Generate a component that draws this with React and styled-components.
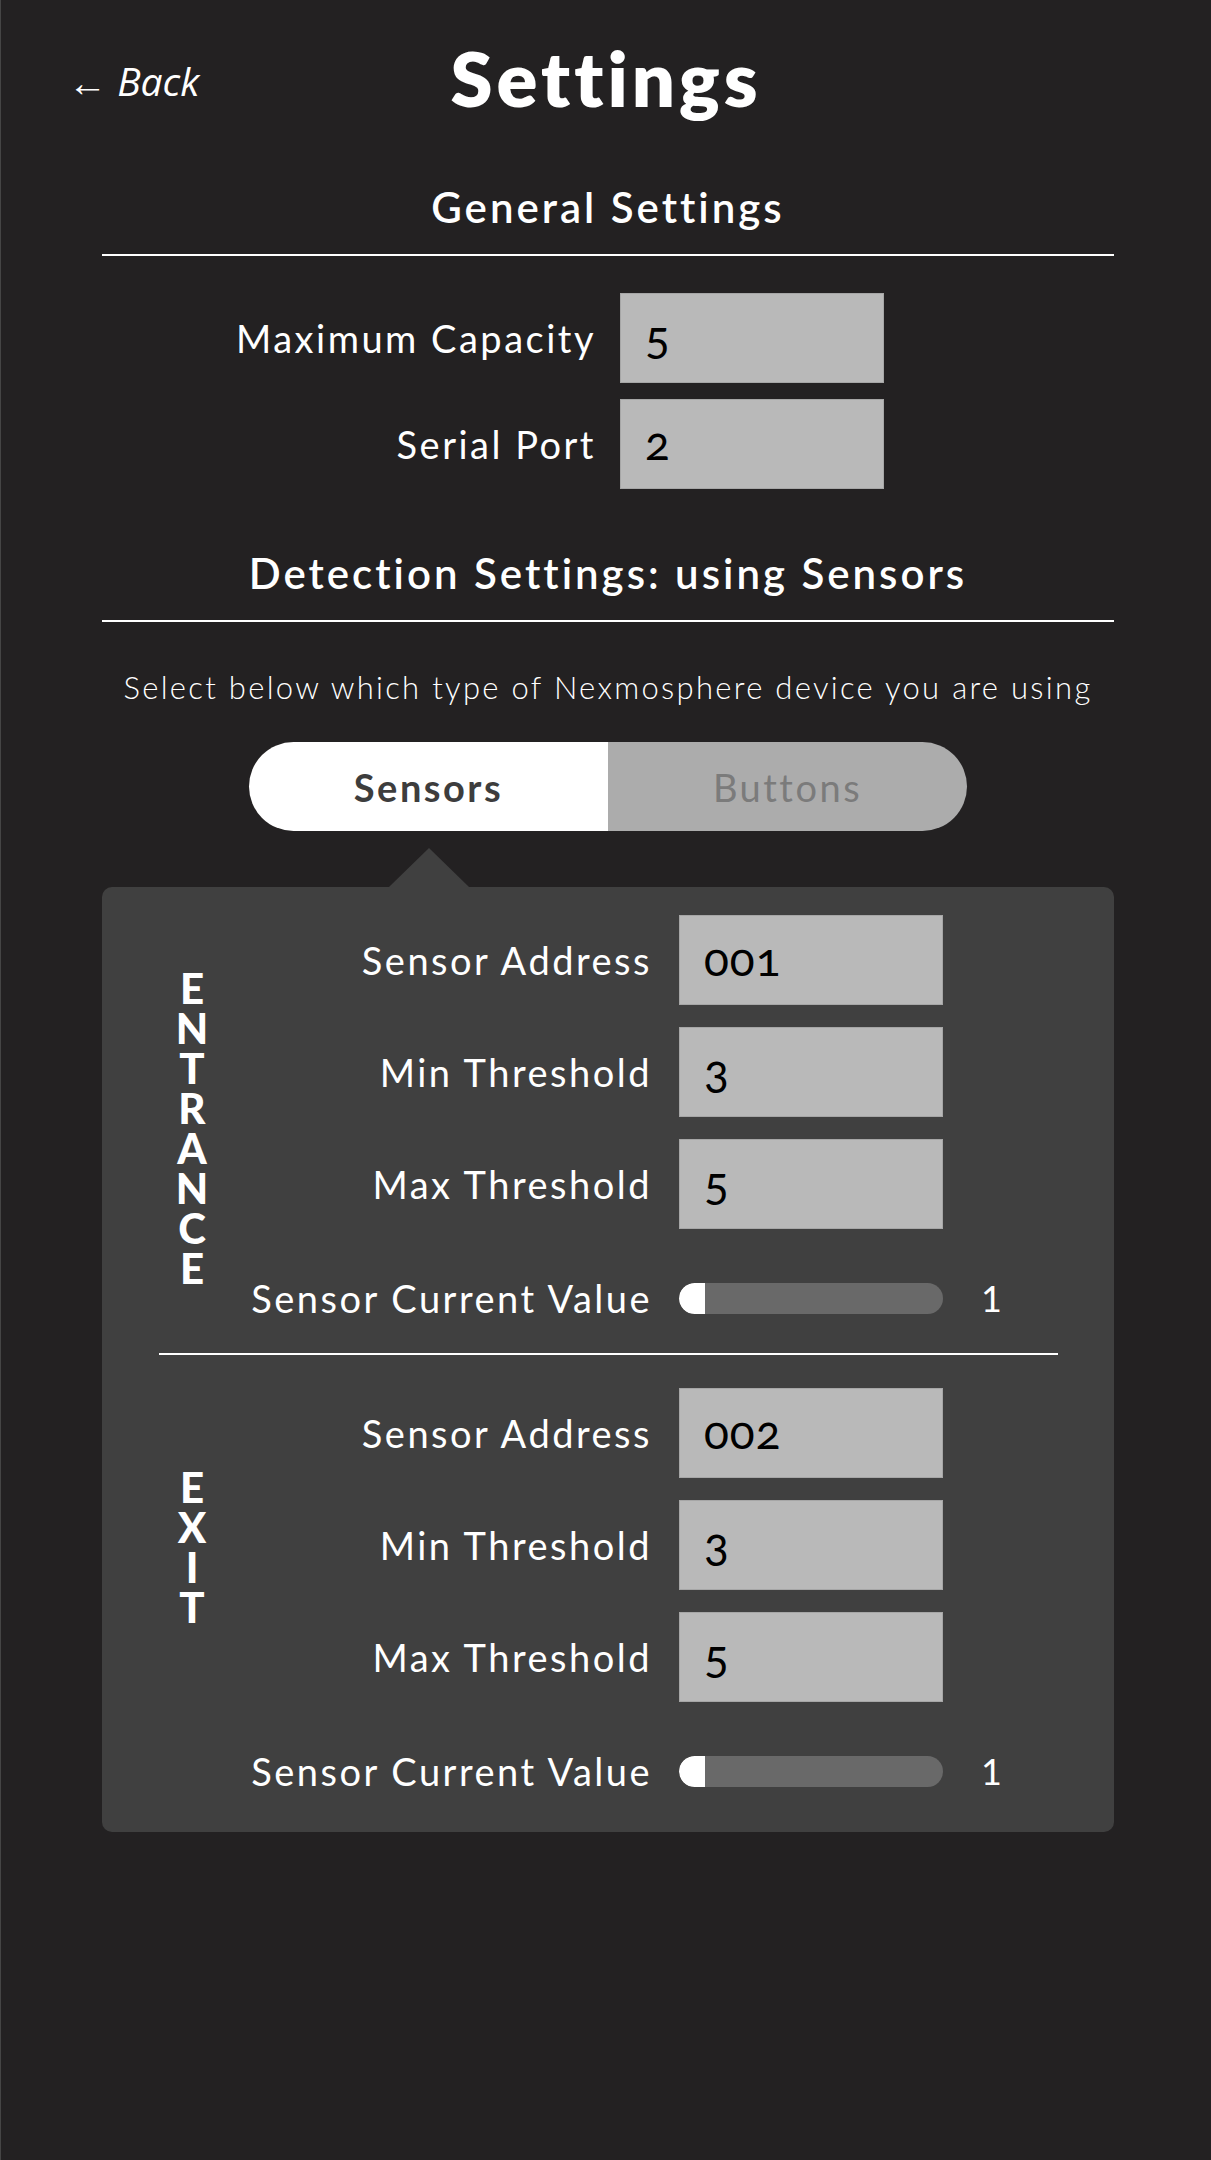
import React, { useState } from "react";
import styled, { createGlobalStyle } from "styled-components";

const GlobalStyle = createGlobalStyle`
  body {
    margin: 0;
    background: #232122;
  }
`;

const Page = styled.div`
  min-height: 2160px;
  box-sizing: border-box;
  background: #232122;
  border-left: 1px solid #454545;
  padding: 40px 0 0 4px;
  font-family: Lato, "Open Sans", sans-serif;
  color: #fff;
`;

const Header = styled.header`
  display: grid;
  grid-template-columns: 1fr auto 1fr;
  align-items: center;
  padding: 0 67px 0 63px;
`;

const BackLink = styled.a`
  justify-self: start;
  padding-top: 6px;
  font-family: "Open Sans", sans-serif;
  font-style: italic;
  font-size: 39px;
  line-height: 38px;
  color: #fff;
  text-decoration: none;
  cursor: pointer;
`;

const Title = styled.h1`
  margin: 0;
  font-size: 76px;
  font-weight: 800;
  line-height: 76px;
  letter-spacing: 4px;
`;

const Content = styled.main`
  width: 1012px;
  margin: 0 auto;
`;

const SectionTitle = styled.h2`
  margin: ${(p) => p.$top}px 0 0;
  font-size: 42px;
  font-weight: 600;
  line-height: 50px;
  letter-spacing: 3px;
  text-align: center;
`;

const Divider = styled.hr`
  margin: 22px 0 0;
  border: none;
  height: 2px;
  background: #fff;
`;

const FieldList = styled.div`
  display: flex;
  flex-direction: column;
  gap: ${(p) => p.$gap}px;
  margin-top: ${(p) => p.$top || 0}px;
`;

const FieldRow = styled.div`
  display: grid;
  grid-template-columns: ${(p) => p.$labelWidth}px 264px 1fr;
  column-gap: ${(p) => p.$gap}px;
  align-items: center;
`;

const Label = styled.label`
  text-align: right;
  font-size: 38px;
  font-weight: 400;
  line-height: 46px;
  letter-spacing: 2.5px;
  white-space: nowrap;
`;

const Input = styled.input`
  height: 90px;
  width: 100%;
  box-sizing: border-box;
  margin: 0;
  padding: 0 24px 4px;
  border: 1px solid #a6a6a6;
  border-radius: 0;
  background: #b9b9b9;
  color: #000;
  font-family: Lato, sans-serif;
  font-size: 46px;
  letter-spacing: 1px;
  font-variant-numeric: oldstyle-nums;
  outline: none;
`;

const Hint = styled.p`
  margin: 45px 0 0;
  font-size: 31px;
  font-weight: 300;
  line-height: 40px;
  letter-spacing: 2.3px;
  text-align: center;
`;

const Toggle = styled.div`
  display: flex;
  width: 718px;
  height: 89px;
  margin: 35px auto 0;
`;

const ToggleButton = styled.button`
  flex: 1;
  border: none;
  margin: 0;
  padding: 0;
  font-family: Lato, sans-serif;
  font-size: 38px;
  letter-spacing: 2.5px;
  cursor: pointer;
  background: ${(p) => (p.$active ? "#fff" : "#acacac")};
  color: ${(p) => (p.$active ? "#3d3d3d" : "#7b7b7b")};
  font-weight: ${(p) => (p.$active ? 700 : 400)};
  &:first-child {
    border-radius: 45px 0 0 45px;
  }
  &:last-child {
    border-radius: 0 45px 45px 0;
  }
`;

const Panel = styled.section`
  position: relative;
  margin-top: 56px;
  background: #404040;
  border-radius: 10px;

  &::before {
    content: "";
    position: absolute;
    top: -39px;
    left: ${(p) => p.$caret}px;
    border-left: 40px solid transparent;
    border-right: 40px solid transparent;
    border-bottom: 39px solid #404040;
  }
`;

const SensorGroup = styled.div`
  display: flex;
  align-items: flex-start;
  padding: ${(p) => p.$top}px 0 ${(p) => p.$bottom}px;
`;

const VerticalLabel = styled.div`
  width: 148px;
  flex-shrink: 0;
  box-sizing: border-box;
  padding-left: 32px;
  margin-top: ${(p) => p.$offset}px;
`;

const Word = styled.span`
  display: block;
  width: min-content;
  margin: 0 auto;
  word-break: break-all;
  text-align: center;
  font-size: 42px;
  font-weight: 900;
  line-height: 40px;
`;

const Rows = styled.div`
  flex: 1;
`;

const SliderRow = styled(FieldRow)`
  margin-top: 46px;
`;

const Track = styled.div`
  height: 31px;
  border-radius: 16px;
  background: #696969;
  overflow: hidden;
`;

const Fill = styled.div`
  height: 100%;
  background: #fff;
  border-radius: 16px 0 0 16px;
`;

const Value = styled.span`
  padding-left: 11px;
  font-size: 36px;
  line-height: 46px;
`;

const Separator = styled.hr`
  margin: 0 56px 0 57px;
  border: none;
  height: 2px;
  background: #fff;
`;

function SensorBlock({ title, address, min, max, current, top, bottom, offset }) {
  return (
    <SensorGroup $top={top} $bottom={bottom}>
      <VerticalLabel $offset={offset}>
        <Word>{title}</Word>
      </VerticalLabel>
      <Rows>
        <FieldList $gap={22}>
          <FieldRow $labelWidth={402} $gap={27}>
            <Label>Sensor Address</Label>
            <Input defaultValue={address} />
          </FieldRow>
          <FieldRow $labelWidth={402} $gap={27}>
            <Label>Min Threshold</Label>
            <Input defaultValue={min} />
          </FieldRow>
          <FieldRow $labelWidth={402} $gap={27}>
            <Label>Max Threshold</Label>
            <Input defaultValue={max} />
          </FieldRow>
        </FieldList>
        <SliderRow $labelWidth={402} $gap={27}>
          <Label>Sensor Current Value</Label>
          <Track>
            <Fill style={{ width: `${(current / 10) * 100}%` }} />
          </Track>
          <Value>{current}</Value>
        </SliderRow>
      </Rows>
    </SensorGroup>
  );
}

export default function App() {
  const [mode, setMode] = useState("sensors");

  return (
    <>
      <GlobalStyle />
      <Page>
        <Header>
          <BackLink>← Back</BackLink>
          <Title>Settings</Title>
          <span />
        </Header>
        <Content>
          <SectionTitle $top={66}>General Settings</SectionTitle>
          <Divider />
          <FieldList $gap={16} $top={37}>
            <FieldRow $labelWidth={494} $gap={24}>
              <Label>Maximum Capacity</Label>
              <Input defaultValue="5" />
            </FieldRow>
            <FieldRow $labelWidth={494} $gap={24}>
              <Label>Serial Port</Label>
              <Input defaultValue="2" />
            </FieldRow>
          </FieldList>

          <SectionTitle $top={59}>Detection Settings: using Sensors</SectionTitle>
          <Divider />
          <Hint>Select below which type of Nexmosphere device you are using</Hint>
          <Toggle>
            <ToggleButton
              $active={mode === "sensors"}
              onClick={() => setMode("sensors")}
            >
              Sensors
            </ToggleButton>
            <ToggleButton
              $active={mode === "buttons"}
              onClick={() => setMode("buttons")}
            >
              Buttons
            </ToggleButton>
          </Toggle>

          <Panel $caret={mode === "sensors" ? 287 : 646}>
            <SensorBlock
              title="ENTRANCE"
              address="001"
              min="3"
              max="5"
              current={1}
              top={28}
              bottom={32}
              offset={53}
            />
            <Separator />
            <SensorBlock
              title="EXIT"
              address="002"
              min="3"
              max="5"
              current={1}
              top={33}
              bottom={38}
              offset={79}
            />
          </Panel>
        </Content>
      </Page>
    </>
  );
}
